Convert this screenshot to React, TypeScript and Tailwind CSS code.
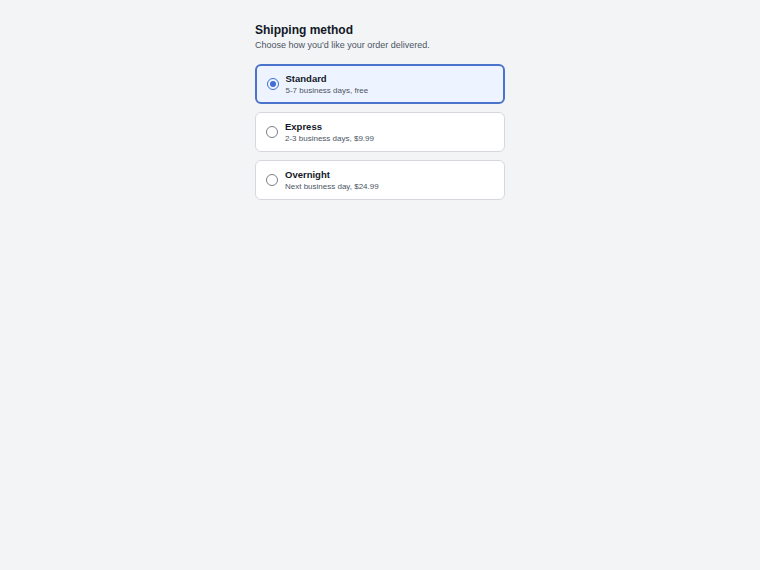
import { useState } from 'react';

interface ShippingOption {
  id: string;
  label: string;
  detail: string;
}

const options: ShippingOption[] = [
  { id: 'standard', label: 'Standard', detail: '5-7 business days, free' },
  { id: 'express', label: 'Express', detail: '2-3 business days, $9.99' },
  { id: 'overnight', label: 'Overnight', detail: 'Next business day, $24.99' },
];

export default function App() {
  const [selected, setSelected] = useState('standard');

  return (
    <div className="min-h-[570px] w-full bg-[#f3f4f6] font-['Liberation_Sans',Arial,sans-serif]">
      <div className="mx-auto w-[250px] pt-[23px]">
        {/* Header */}
        <h1 className="text-[12px] leading-[15px] font-bold text-[#111827]">Shipping method</h1>
        <p className="mt-[1px] text-[9px] leading-[12px] text-[#4b5563]">
          Choose how you'd like your order delivered.
        </p>

        {/* Options */}
        <div className="mt-[13px] flex flex-col gap-[8px]">
          {options.map(opt => {
            const active = selected === opt.id;
            return (
              <label
                key={opt.id}
                onClick={() => setSelected(opt.id)}
                className={`flex h-[40px] cursor-pointer items-center gap-[7px] rounded-[6px] ${
                  active
                    ? 'border-2 border-[#4a74cc] bg-[#eef4ff] px-[9.5px]'
                    : 'border-[1.5px] border-[#d5d8dd] bg-white px-[10px]'
                }`}
              >
                <span
                  className={`flex h-[12px] w-[12px] shrink-0 items-center justify-center rounded-full border-[1.25px] ${
                    active ? 'border-[#3f6fd1]' : 'border-[#7b7f86]'
                  }`}
                >
                  {active && <span className="h-[6px] w-[6px] rounded-full bg-[#3f6fd1]" />}
                </span>
                <span className="flex flex-col">
                  <span className="text-[9.5px] leading-[13px] font-bold text-[#111827]">{opt.label}</span>
                  <span className="text-[8px] leading-[11px] text-[#4b5563]">{opt.detail}</span>
                </span>
              </label>
            );
          })}
        </div>
      </div>
    </div>
  );
}
